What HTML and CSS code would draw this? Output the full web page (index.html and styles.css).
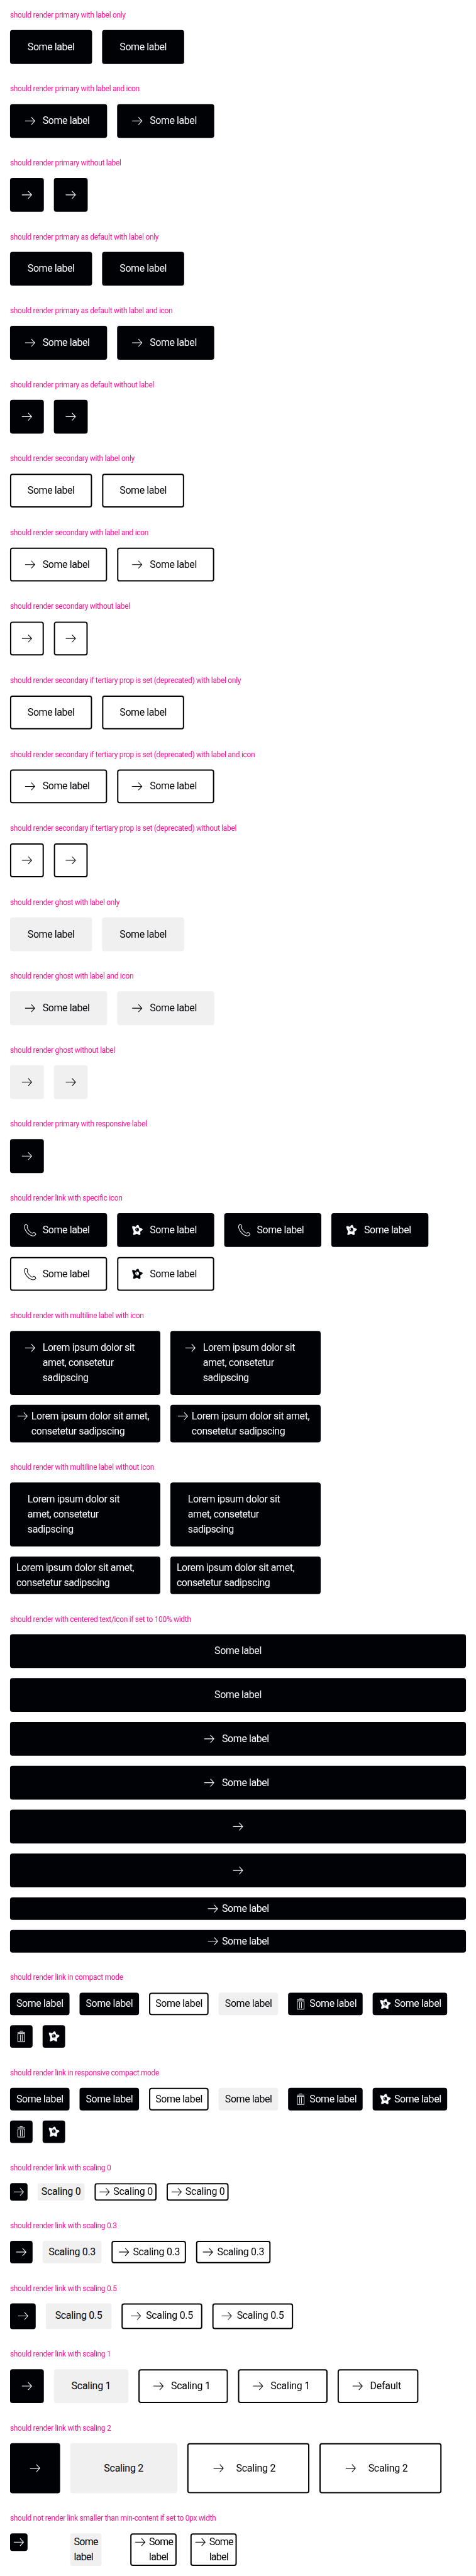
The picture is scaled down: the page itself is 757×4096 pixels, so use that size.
FILE: index.html
```
<!DOCTYPE html>
<html lang="en">
<head>
<meta charset="utf-8">
<title>Link pure button variants</title>
<link rel="stylesheet" href="styles.css">
</head>
<body>
<svg class="sprite" aria-hidden="true">
  <symbol id="arrow" viewBox="0 0 24 24"><path d="M4 12H19.3M14 6L19.5 12L14 18" fill="none" stroke="currentColor" stroke-width="1.05"/></symbol>
  <symbol id="phone" viewBox="0 0 24 24"><path d="M5.8 2.8C3.2 4 2.5 6.3 3.1 8.6C4.8 14.6 9.8 20 16.2 21.4C18.5 21.7 20.4 20.6 21.3 19.2C20.9 17.6 19.6 16.3 18.2 15.7L15.6 17.3C12.2 15.6 8.9 11.9 7.3 8.3L8.3 6.7C8 5 7.2 3.6 5.8 2.8Z" fill="none" stroke="currentColor" stroke-width="1.05" stroke-linejoin="round"/></symbol>
  <symbol id="trash" viewBox="0 0 24 24"><path d="M6.5 7.5H17.5V20.5H6.5ZM6 5.5H18M10 4.5V3.7H14V4.5M10.5 9V19M13.5 9V19" fill="none" stroke="currentColor" stroke-width="1"/></symbol>
  <symbol id="star" viewBox="0 0 24 24"><path fill="currentColor" fill-rule="evenodd" d="M4.3 5.8C6 5.2 7.8 6.7 9.4 7C10.5 6 10.8 4 12.9 3.8C15 3.8 14.9 6.3 15.8 8.3C17.5 9.4 20.5 8.8 21 11C20.3 13.2 17.5 13.4 16.9 14.8C16.9 16.6 18 19 16.5 20C14.5 20.4 13.3 18.5 11.5 18C9.5 18.4 8 20.5 6 19.6C4.8 18.3 6.7 16 6.4 13.8C5.5 11 3.2 8 4.3 5.8ZM9 10.5C8.8 13 10.4 14.8 12.6 14.6C14.6 14.3 15.3 12.2 14.7 10.2C13.7 7.7 9.6 7.9 9 10.5ZM10.3 12.6C11.5 13.7 12.8 13.5 13.8 12.5C13.6 14.2 10.8 14.4 10.3 12.6ZM10 10C10 9.3 11.2 9.2 11.2 10.1V11.2C11.2 12 10 12 10 11.2Z"/></symbol>
</svg>
<main class="page">
  <section class="case"><h2 class="title">should render primary with label only</h2>
    <div class="row"><a class="btn">Some label</a><a class="btn">Some label</a></div></section>
  <section class="case"><h2 class="title">should render primary with label and icon</h2>
    <div class="row"><a class="btn has-icon"><svg class="icon"><use href="#arrow"/></svg>Some label</a><a class="btn has-icon"><svg class="icon"><use href="#arrow"/></svg>Some label</a></div></section>
  <section class="case"><h2 class="title">should render primary without label</h2>
    <div class="row"><a class="btn only"><svg class="icon"><use href="#arrow"/></svg></a><a class="btn only"><svg class="icon"><use href="#arrow"/></svg></a></div></section>

  <section class="case"><h2 class="title">should render primary as default with label only</h2>
    <div class="row"><a class="btn">Some label</a><a class="btn">Some label</a></div></section>
  <section class="case"><h2 class="title">should render primary as default with label and icon</h2>
    <div class="row"><a class="btn has-icon"><svg class="icon"><use href="#arrow"/></svg>Some label</a><a class="btn has-icon"><svg class="icon"><use href="#arrow"/></svg>Some label</a></div></section>
  <section class="case"><h2 class="title">should render primary as default without label</h2>
    <div class="row"><a class="btn only"><svg class="icon"><use href="#arrow"/></svg></a><a class="btn only"><svg class="icon"><use href="#arrow"/></svg></a></div></section>

  <section class="case"><h2 class="title">should render secondary with label only</h2>
    <div class="row"><a class="btn secondary">Some label</a><a class="btn secondary">Some label</a></div></section>
  <section class="case"><h2 class="title">should render secondary with label and icon</h2>
    <div class="row"><a class="btn secondary has-icon"><svg class="icon"><use href="#arrow"/></svg>Some label</a><a class="btn secondary has-icon"><svg class="icon"><use href="#arrow"/></svg>Some label</a></div></section>
  <section class="case"><h2 class="title">should render secondary without label</h2>
    <div class="row"><a class="btn secondary only"><svg class="icon"><use href="#arrow"/></svg></a><a class="btn secondary only"><svg class="icon"><use href="#arrow"/></svg></a></div></section>

  <section class="case"><h2 class="title">should render secondary if tertiary prop is set (deprecated) with label only</h2>
    <div class="row"><a class="btn secondary">Some label</a><a class="btn secondary">Some label</a></div></section>
  <section class="case"><h2 class="title">should render secondary if tertiary prop is set (deprecated) with label and icon</h2>
    <div class="row"><a class="btn secondary has-icon"><svg class="icon"><use href="#arrow"/></svg>Some label</a><a class="btn secondary has-icon"><svg class="icon"><use href="#arrow"/></svg>Some label</a></div></section>
  <section class="case"><h2 class="title">should render secondary if tertiary prop is set (deprecated) without label</h2>
    <div class="row"><a class="btn secondary only"><svg class="icon"><use href="#arrow"/></svg></a><a class="btn secondary only"><svg class="icon"><use href="#arrow"/></svg></a></div></section>

  <section class="case"><h2 class="title">should render ghost with label only</h2>
    <div class="row"><a class="btn ghost">Some label</a><a class="btn ghost">Some label</a></div></section>
  <section class="case"><h2 class="title">should render ghost with label and icon</h2>
    <div class="row"><a class="btn ghost has-icon"><svg class="icon"><use href="#arrow"/></svg>Some label</a><a class="btn ghost has-icon"><svg class="icon"><use href="#arrow"/></svg>Some label</a></div></section>
  <section class="case"><h2 class="title">should render ghost without label</h2>
    <div class="row"><a class="btn ghost only"><svg class="icon"><use href="#arrow"/></svg></a><a class="btn ghost only"><svg class="icon"><use href="#arrow"/></svg></a></div></section>

  <section class="case"><h2 class="title">should render primary with responsive label</h2>
    <div class="row"><a class="btn only"><svg class="icon"><use href="#arrow"/></svg></a></div></section>

  <section class="case"><h2 class="title">should render link with specific icon</h2>
    <div class="row"><a class="btn has-icon"><svg class="icon"><use href="#phone"/></svg>Some label</a><a class="btn has-icon"><svg class="icon"><use href="#star"/></svg>Some label</a><a class="btn has-icon"><svg class="icon"><use href="#phone"/></svg>Some label</a><a class="btn has-icon"><svg class="icon"><use href="#star"/></svg>Some label</a></div>
    <div class="row"><a class="btn secondary has-icon"><svg class="icon"><use href="#phone"/></svg>Some label</a><a class="btn secondary has-icon"><svg class="icon"><use href="#star"/></svg>Some label</a></div></section>

  <section class="case"><h2 class="title">should render with multiline label with icon</h2>
    <div class="row"><a class="btn has-icon multi"><svg class="icon"><use href="#arrow"/></svg><span>Lorem ipsum dolor sit<br>amet, consetetur<br>sadipscing</span></a><a class="btn has-icon multi"><svg class="icon"><use href="#arrow"/></svg><span>Lorem ipsum dolor sit<br>amet, consetetur<br>sadipscing</span></a></div>
    <div class="row"><a class="btn compact has-icon multi"><svg class="icon"><use href="#arrow"/></svg><span>Lorem ipsum dolor sit amet,<br>consetetur sadipscing</span></a><a class="btn compact has-icon multi"><svg class="icon"><use href="#arrow"/></svg><span>Lorem ipsum dolor sit amet,<br>consetetur sadipscing</span></a></div></section>

  <section class="case"><h2 class="title">should render with multiline label without icon</h2>
    <div class="row"><a class="btn multi"><span>Lorem ipsum dolor sit<br>amet, consetetur<br>sadipscing</span></a><a class="btn multi"><span>Lorem ipsum dolor sit<br>amet, consetetur<br>sadipscing</span></a></div>
    <div class="row"><a class="btn compact multi"><span>Lorem ipsum dolor sit amet,<br>consetetur sadipscing</span></a><a class="btn compact multi"><span>Lorem ipsum dolor sit amet,<br>consetetur sadipscing</span></a></div></section>

  <section class="case"><h2 class="title">should render with centered text/icon if set to 100% width</h2>
    <a class="btn full">Some label</a>
    <a class="btn full">Some label</a>
    <a class="btn full has-icon"><svg class="icon"><use href="#arrow"/></svg>Some label</a>
    <a class="btn full has-icon"><svg class="icon"><use href="#arrow"/></svg>Some label</a>
    <a class="btn full only"><svg class="icon"><use href="#arrow"/></svg></a>
    <a class="btn full only"><svg class="icon"><use href="#arrow"/></svg></a>
    <a class="btn full compact has-icon"><svg class="icon"><use href="#arrow"/></svg>Some label</a>
    <a class="btn full compact has-icon"><svg class="icon"><use href="#arrow"/></svg>Some label</a></section>

  <section class="case"><h2 class="title">should render link in compact mode</h2>
    <div class="row"><a class="btn compact">Some label</a><a class="btn compact">Some label</a><a class="btn compact secondary">Some label</a><a class="btn compact ghost">Some label</a><a class="btn compact has-icon"><svg class="icon"><use href="#trash"/></svg>Some label</a><a class="btn compact has-icon"><svg class="icon"><use href="#star"/></svg>Some label</a></div>
    <div class="row"><a class="btn compact only"><svg class="icon"><use href="#trash"/></svg></a><a class="btn compact only"><svg class="icon"><use href="#star"/></svg></a></div></section>

  <section class="case"><h2 class="title">should render link in responsive compact mode</h2>
    <div class="row"><a class="btn compact">Some label</a><a class="btn compact">Some label</a><a class="btn compact secondary">Some label</a><a class="btn compact ghost">Some label</a><a class="btn compact has-icon"><svg class="icon"><use href="#trash"/></svg>Some label</a><a class="btn compact has-icon"><svg class="icon"><use href="#star"/></svg>Some label</a></div>
    <div class="row"><a class="btn compact only"><svg class="icon"><use href="#trash"/></svg></a><a class="btn compact only"><svg class="icon"><use href="#star"/></svg></a></div></section>

  <section class="case scaling s0"><h2 class="title">should render link with scaling 0</h2>
    <div class="row"><a class="btn only"><svg class="icon"><use href="#arrow"/></svg></a><a class="btn ghost">Scaling 0</a><a class="btn secondary has-icon"><svg class="icon"><use href="#arrow"/></svg>Scaling 0</a><a class="btn secondary has-icon"><svg class="icon"><use href="#arrow"/></svg>Scaling 0</a></div></section>
  <section class="case scaling s03"><h2 class="title">should render link with scaling 0.3</h2>
    <div class="row"><a class="btn only"><svg class="icon"><use href="#arrow"/></svg></a><a class="btn ghost">Scaling 0.3</a><a class="btn secondary has-icon"><svg class="icon"><use href="#arrow"/></svg>Scaling 0.3</a><a class="btn secondary has-icon"><svg class="icon"><use href="#arrow"/></svg>Scaling 0.3</a></div></section>
  <section class="case scaling s05"><h2 class="title">should render link with scaling 0.5</h2>
    <div class="row"><a class="btn only"><svg class="icon"><use href="#arrow"/></svg></a><a class="btn ghost">Scaling 0.5</a><a class="btn secondary has-icon"><svg class="icon"><use href="#arrow"/></svg>Scaling 0.5</a><a class="btn secondary has-icon"><svg class="icon"><use href="#arrow"/></svg>Scaling 0.5</a></div></section>
  <section class="case scaling"><h2 class="title">should render link with scaling 1</h2>
    <div class="row"><a class="btn only"><svg class="icon"><use href="#arrow"/></svg></a><a class="btn ghost">Scaling 1</a><a class="btn secondary has-icon"><svg class="icon"><use href="#arrow"/></svg>Scaling 1</a><a class="btn secondary has-icon"><svg class="icon"><use href="#arrow"/></svg>Scaling 1</a><a class="btn secondary has-icon"><svg class="icon"><use href="#arrow"/></svg>Default</a></div></section>
  <section class="case scaling s2"><h2 class="title">should render link with scaling 2</h2>
    <div class="row"><a class="btn only"><svg class="icon"><use href="#arrow"/></svg></a><a class="btn ghost">Scaling 2</a><a class="btn secondary has-icon"><svg class="icon"><use href="#arrow"/></svg>Scaling 2</a><a class="btn secondary has-icon"><svg class="icon"><use href="#arrow"/></svg>Scaling 2</a></div></section>
  <section class="case s0"><h2 class="title">should not render link smaller than min-content if set to 0px width</h2>
    <div class="row slots"><div><a class="btn only"><svg class="icon"><use href="#arrow"/></svg></a></div><div><a class="btn ghost"><span>Some<br>label</span></a></div><div><a class="btn secondary has-icon"><svg class="icon"><use href="#arrow"/></svg><span>Some<br>label</span></a></div><div><a class="btn secondary has-icon"><svg class="icon"><use href="#arrow"/></svg><span>Some<br>label</span></a></div></div></section>
</main>
</body>
</html>
```
FILE: styles.css
```
* { box-sizing: border-box; }

html { height: 4096px; overflow: hidden; }

body {
  margin: 0;
  height: 4096px;
  overflow: hidden;
  background: #fff;
  font-family: Roboto, "Liberation Sans", sans-serif;
}

.sprite { display: none; }

.page {
  width: 760px;
  transform: scale(0.99605, 0.99635);
  transform-origin: 0 0;
}

.case {
  display: flex;
  flex-direction: column;
  gap: 16px;
  padding: 16px;

  --pad-y: 13px;
  --pad-x: 26px;
  --pad-icon: 18px;
  --gap: 8px;
}

.title {
  margin: 0;
  font-size: 12px;
  line-height: 16px;
  font-weight: 400;
  letter-spacing: -0.3px;
  color: #ff1493;
}

.row {
  display: flex;
  align-items: flex-start;
  gap: 16px;
}

.btn {
  display: flex;
  justify-content: center;
  align-items: flex-start;
  gap: var(--gap);
  padding: var(--pad-y) var(--pad-x);
  border: 2px solid #010205;
  border-radius: 4px;
  background: #010205;
  color: #fbfcff;
  font-size: 16px;
  line-height: 24px;
  letter-spacing: -0.4px;
  white-space: nowrap;
}

.has-icon { padding-left: var(--pad-icon); }
.only { padding: var(--pad-y); }

.secondary {
  background: #fff;
  color: #010205;
}

.ghost {
  background: #f0f0f1;
  border-color: #f0f0f1;
  color: #010205;
}

.icon {
  flex: none;
  display: block;
  width: 24px;
  height: 24px;
}

.compact {
  --pad-y: 4px;
  --pad-x: 8px;
  --pad-icon: 6px;
  --gap: 2px;
}

.compact.has-icon { padding-left: 6px; }

.multi {
  width: 240px;
  justify-content: flex-start;
}

.s0 { --pad-y: 0px; --pad-x: 4px; --pad-icon: 2px; --gap: 2px; }
.s03 { --pad-y: 3.9px; --pad-x: 7.8px; --pad-icon: 5.4px; --gap: 2.4px; }
.s05 { --pad-y: 6.5px; --pad-x: 13px; --pad-icon: 9px; --gap: 4px; }
.s2 { --pad-y: 26px; --pad-x: 52px; --pad-icon: 36px; --gap: 16px; }

.scaling .btn { letter-spacing: -0.24px; }
.scaling.s03 .btn,
.scaling.s05 .btn { letter-spacing: -0.3px; }

.slots > div {
  display: flex;
  align-items: flex-start;
  width: 80px;
}

.slots .btn { letter-spacing: -0.7px; }
```
